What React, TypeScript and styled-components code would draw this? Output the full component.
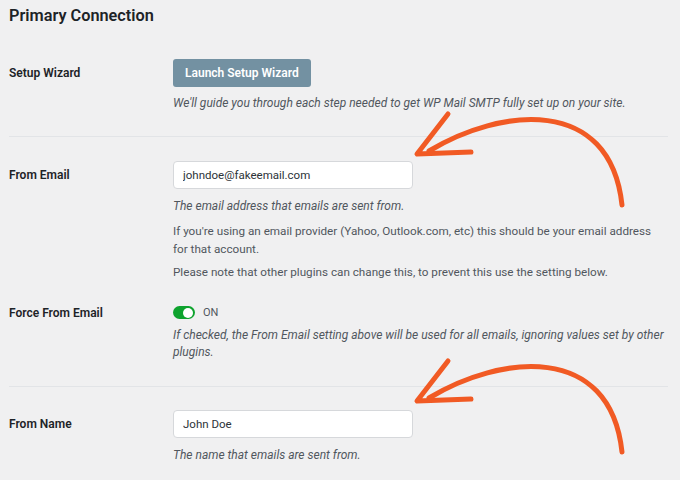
import React from "react";
import styled, { createGlobalStyle } from "styled-components";

const Global = createGlobalStyle`
  html, body { margin: 0; padding: 0; background: #f0f0f1; }
  body { font-family: Roboto, "Liberation Sans", sans-serif; color: #1d2327; }
`;

const Page = styled.div`
  position: relative;
  width: 680px;
  height: 480px;
  overflow: hidden;
  padding: 6px 0 0 9px;
  box-sizing: border-box;
`;

const Content = styled.div`
  width: 659px;
`;

const Title = styled.h2`
  margin: 0;
  font-size: 16.3px;
  line-height: 20px;
  font-weight: 600;
  color: #1d2327;
`;

const Section = styled.div<{ $first?: boolean; $last?: boolean }>`
  display: flex;
  flex-direction: column;
  gap: 22px;
  padding: ${(p) => (p.$first ? "33px 0 23px" : p.$last ? "23px 0 24px" : "24px 0 24px")};
  border-bottom: ${(p) => (p.$last ? "none" : "1px solid #e2e4e7")};
`;

const Row = styled.div`
  display: grid;
  grid-template-columns: 164px 1fr;
  align-items: start;
`;

const Label = styled.div<{ $h: number }>`
  font-size: 12px;
  font-weight: 600;
  line-height: ${(p) => p.$h}px;
  color: #1d2327;
`;

const Field = styled.div`
  display: flex;
  flex-direction: column;
  align-items: flex-start;
`;

const Button = styled.button`
  height: 28px;
  padding: 0 12px;
  border: none;
  border-radius: 3px;
  background: #7391a2;
  color: #fff;
  font-family: inherit;
  font-size: 12px;
  font-weight: 600;
  cursor: pointer;
`;

const Input = styled.input`
  box-sizing: border-box;
  width: 240px;
  height: 28px;
  padding: 0 9px;
  border: 1px solid #d6d8db;
  border-radius: 4px;
  background: #fff;
  font-family: inherit;
  font-size: 11.5px;
  color: #2c3338;
  outline: none;
`;

const Desc = styled.p<{ $italic?: boolean; $mt: number }>`
  margin: ${(p) => p.$mt}px 0 0;
  font-size: ${(p) => (p.$italic ? "12px" : "11.7px")};
  line-height: 17.5px;
  font-style: ${(p) => (p.$italic ? "italic" : "normal")};
  color: #50575e;
  max-width: 495px;
`;

const ToggleRow = styled.div`
  display: flex;
  align-items: center;
  gap: 8px;
  height: 18px;
`;

const Switch = styled.span`
  position: relative;
  width: 22px;
  height: 13px;
  border-radius: 7px;
  background: #0ea32e;
  &::after {
    content: "";
    position: absolute;
    right: 2px;
    top: 1.5px;
    width: 10px;
    height: 10px;
    border-radius: 50%;
    background: #fff;
  }
`;

const SwitchText = styled.span`
  font-size: 11px;
  color: #50575e;
`;

const Arrow = styled.svg<{ $top: number }>`
  position: absolute;
  left: 0;
  top: ${(p) => p.$top}px;
  pointer-events: none;
`;

const CurvedArrow: React.FC<{ top: number }> = ({ top }) => (
  <Arrow $top={top} width="680" height="220" viewBox="0 0 680 220">
    <g fill="none" stroke="#f15a24" strokeWidth="5" strokeLinecap="round" strokeLinejoin="round">
      <path d="M429 151 C500 108 610 95 622 205" />
      <path d="M448 114 L417 154 L471 152" />
    </g>
  </Arrow>
);

export default function App() {
  return (
    <Page>
      <Global />
      <Content>
        <Title>Primary Connection</Title>
        <Section $first>
          <Row>
            <Label $h={28}>Setup Wizard</Label>
            <Field>
              <Button>Launch Setup Wizard</Button>
              <Desc $italic $mt={8}>
                We'll guide you through each step needed to get WP Mail SMTP fully set up on your site.
              </Desc>
            </Field>
          </Row>
        </Section>
        <Section>
          <Row>
            <Label $h={28}>From Email</Label>
            <Field>
              <Input defaultValue="johndoe@fakeemail.com" />
              <Desc $italic $mt={9}>The email address that emails are sent from.</Desc>
              <Desc $mt={8}>
                If you're using an email provider (Yahoo, Outlook.com, etc) this should be your email address
                for that account.
              </Desc>
              <Desc $mt={6}>Please note that other plugins can change this, to prevent this use the setting below.</Desc>
            </Field>
          </Row>
          <Row>
            <Label $h={18}>Force From Email</Label>
            <Field>
              <ToggleRow>
                <Switch />
                <SwitchText>ON</SwitchText>
              </ToggleRow>
              <Desc $italic $mt={5}>
                If checked, the From Email setting above will be used for all emails, ignoring values set by other
                plugins.
              </Desc>
            </Field>
          </Row>
        </Section>
        <Section $last>
          <Row>
            <Label $h={28}>From Name</Label>
            <Field>
              <Input defaultValue="John Doe" />
              <Desc $italic $mt={9}>The name that emails are sent from.</Desc>
            </Field>
          </Row>
        </Section>
      </Content>
      <CurvedArrow top={0} />
      <CurvedArrow top={247} />
    </Page>
  );
}
